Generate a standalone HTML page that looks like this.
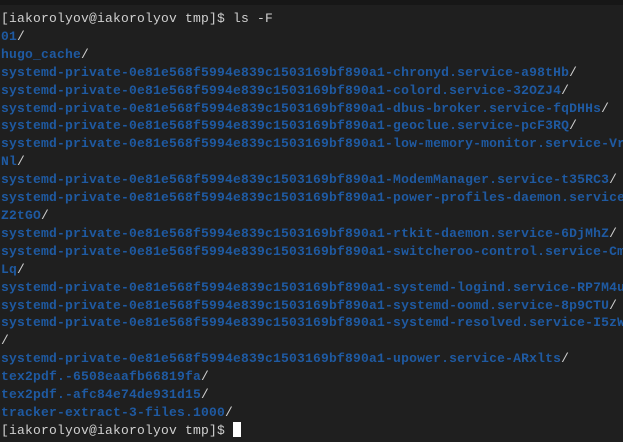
<!DOCTYPE html>
<html><head><meta charset="utf-8"><style>
html,body{margin:0;padding:0;background:#1f1f1f;width:623px;height:442px;overflow:hidden}
.top{position:absolute;left:0;top:0;width:623px;height:5px;background:#171717}
pre{position:absolute;left:1px;top:10px;margin:0;font-family:"Liberation Mono",monospace;font-size:13px;letter-spacing:0.2px;line-height:17.9px;color:#d0d0d0;white-space:pre}
b{color:#1f5aa2;font-weight:bold}
.c{display:inline-block;width:8px;height:15px;background:#fff;vertical-align:-3px}
</style></head><body><div class="top"></div><pre>[iakorolyov@iakorolyov tmp]$ ls -F
<b>01</b>/
<b>hugo_cache</b>/
<b>systemd-private-0e81e568f5994e839c1503169bf890a1-chronyd.service-a98tHb</b>/
<b>systemd-private-0e81e568f5994e839c1503169bf890a1-colord.service-32OZJ4</b>/
<b>systemd-private-0e81e568f5994e839c1503169bf890a1-dbus-broker.service-fqDHHs</b>/
<b>systemd-private-0e81e568f5994e839c1503169bf890a1-geoclue.service-pcF3RQ</b>/
<b>systemd-private-0e81e568f5994e839c1503169bf890a1-low-memory-monitor.service-Vr</b>
<b>Nl</b>/
<b>systemd-private-0e81e568f5994e839c1503169bf890a1-ModemManager.service-t35RC3</b>/
<b>systemd-private-0e81e568f5994e839c1503169bf890a1-power-profiles-daemon.service-</b>
<b>Z2tGO</b>/
<b>systemd-private-0e81e568f5994e839c1503169bf890a1-rtkit-daemon.service-6DjMhZ</b>/
<b>systemd-private-0e81e568f5994e839c1503169bf890a1-switcheroo-control.service-Cm</b>
<b>Lq</b>/
<b>systemd-private-0e81e568f5994e839c1503169bf890a1-systemd-logind.service-RP7M4u</b>
<b>systemd-private-0e81e568f5994e839c1503169bf890a1-systemd-oomd.service-8p9CTU</b>/
<b>systemd-private-0e81e568f5994e839c1503169bf890a1-systemd-resolved.service-I5zW</b>
/
<b>systemd-private-0e81e568f5994e839c1503169bf890a1-upower.service-ARxlts</b>/
<b>tex2pdf.-6508eaafb66819fa</b>/
<b>tex2pdf.-afc84e74de931d15</b>/
<b>tracker-extract-3-files.1000</b>/
[iakorolyov@iakorolyov tmp]$ <span class="c"></span></pre></body></html>
